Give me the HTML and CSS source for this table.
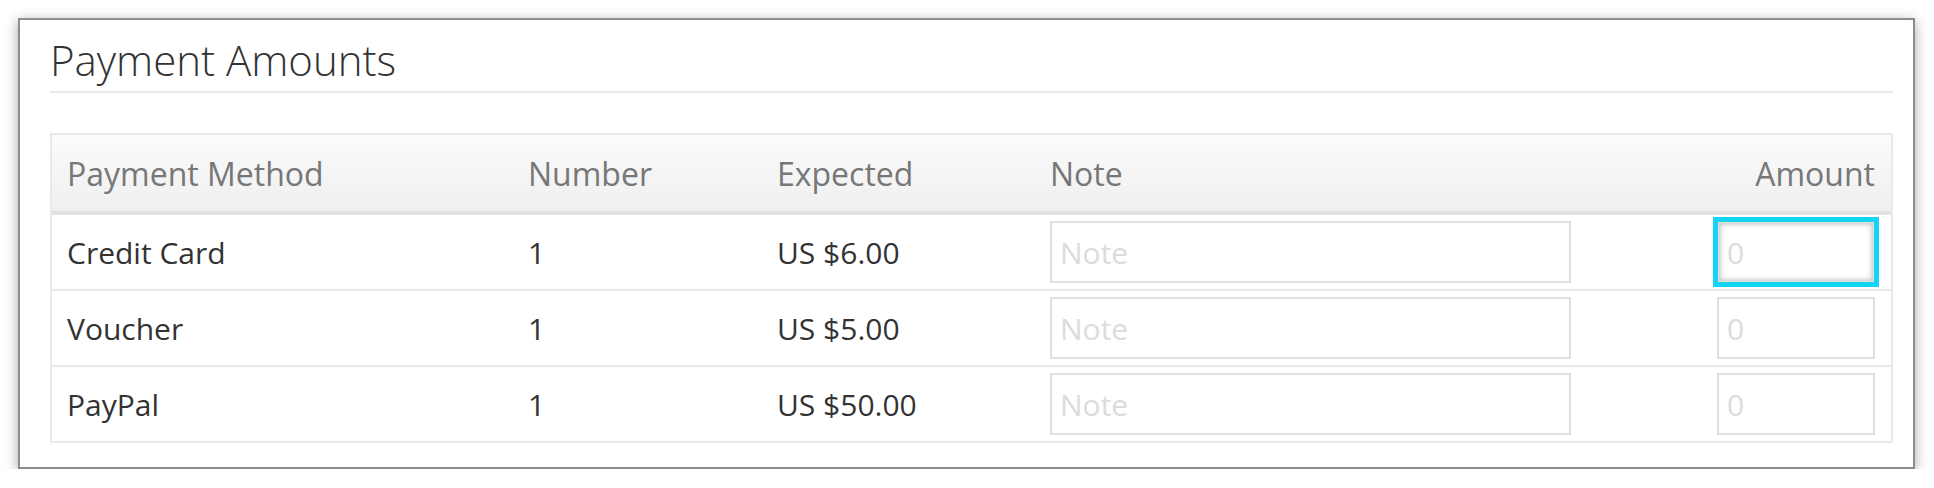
FILE: index.html
```html
<!DOCTYPE html>
<html lang="en">
<head>
<meta charset="utf-8">
<title>Payment Amounts</title>
<link rel="stylesheet" href="styles.css">
</head>
<body>
<section class="panel">
  <h1 class="panel-title">Payment Amounts</h1>
  <table class="pay-table">
    <colgroup>
      <col class="c-method"><col class="c-number"><col class="c-expected"><col class="c-note"><col class="c-amount">
    </colgroup>
    <thead>
      <tr>
        <th>Payment Method</th>
        <th>Number</th>
        <th>Expected</th>
        <th>Note</th>
        <th class="right">Amount</th>
      </tr>
    </thead>
    <tbody>
      <tr>
        <td>Credit Card</td>
        <td>1</td>
        <td>US $6.00</td>
        <td><input class="field note" type="text" placeholder="Note"></td>
        <td class="right"><input class="field amount focused" type="text" placeholder="0"></td>
      </tr>
      <tr>
        <td>Voucher</td>
        <td>1</td>
        <td>US $5.00</td>
        <td><input class="field note" type="text" placeholder="Note"></td>
        <td class="right"><input class="field amount" type="text" placeholder="0"></td>
      </tr>
      <tr>
        <td>PayPal</td>
        <td>1</td>
        <td>US $50.00</td>
        <td><input class="field note" type="text" placeholder="Note"></td>
        <td class="right"><input class="field amount" type="text" placeholder="0"></td>
      </tr>
    </tbody>
  </table>
</section>
</body>
</html>
```

FILE: styles.css
```css
* { box-sizing: border-box; }

html, body {
  margin: 0;
  padding: 0;
  background: #ffffff;
}

body {
  font-family: "Open Sans", "Liberation Sans", sans-serif;
  color: #333333;
  padding: 18px 19px 0 18px;
}

.panel {
  border: 2px solid #8d8d8d;
  background: #ffffff;
  box-shadow: 0 3px 12px rgba(0, 0, 0, 0.35);
  padding: 0 20px 24px 30px;
}

.panel-title {
  margin: 0;
  padding: 15px 0 7px 0;
  font-size: 42px;
  line-height: 1.17;
  font-weight: 300;
  color: #333333;
  border-bottom: 2px solid #e9e9e9;
}

.pay-table {
  margin-top: 40px;
  width: 100%;
  table-layout: fixed;
  border-collapse: separate;
  border-spacing: 0;
  border: 2px solid #e9e9e9;
}

.c-method { width: 461px; }
.c-number { width: 249px; }
.c-expected { width: 273px; }
.c-note { width: 666px; }

.pay-table th {
  height: 80px;
  padding: 0 16px 0 15px;
  text-align: left;
  font-weight: 400;
  font-size: 32px;
  color: #777777;
  background: linear-gradient(#fbfbfb, #efefef);
  border-bottom: 4px solid #e2e2e2;
  vertical-align: middle;
}

.pay-table td {
  height: 76px;
  padding: 0 16px 0 15px;
  font-size: 30px;
  color: #333333;
  border-bottom: 2px solid #e9e9e9;
  vertical-align: middle;
}

.pay-table tbody tr:last-child td {
  border-bottom: none;
  height: 74px;
}

.pay-table .right { text-align: right; }

.field {
  display: block;
  height: 62px;
  border: 2px solid #e0e0e0;
  background: #ffffff;
  font-family: "Open Sans", "Liberation Sans", sans-serif;
  font-size: 30px;
  color: #333333;
  padding: 0 8px;
  margin: 0;
  outline: none;
}

.field::placeholder { color: #dcdcdc; }

.field.note { width: 521px; }

.field.amount {
  width: 158px;
  margin-left: auto;
}

.field.focused {
  outline: 5px solid #13d4f5;
  outline-offset: -1px;
  box-shadow: inset 0 0 6px rgba(0, 0, 0, 0.35);
}
```
